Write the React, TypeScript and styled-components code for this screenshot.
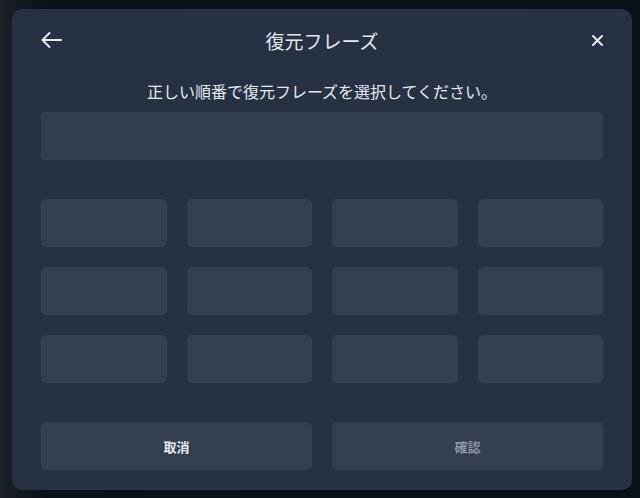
import React from "react";
import styled, { createGlobalStyle } from "styled-components";

const Global = createGlobalStyle`
  html, body { margin: 0; padding: 0; }
  body {
    width: 640px;
    height: 498px;
    overflow: hidden;
    background: linear-gradient(90deg, #1b2029 0px, #141922 20px, #0b1119 45px, #0a1018 100%);
    font-family: "Noto Sans CJK JP", "Noto Sans", sans-serif;
  }
`;

const Stage = styled.div`
  width: 640px;
  height: 498px;
  padding: 9px 8px 8px 12px;
  box-sizing: border-box;
  display: flex;
`;

const Modal = styled.div`
  width: 620px;
  height: 481px;
  box-sizing: border-box;
  background: #263244;
  border-radius: 10px;
  padding: 20px 29px 20px 29px;
  display: flex;
  flex-direction: column;
`;

const Header = styled.div`
  height: 22px;
  display: flex;
  align-items: center;
  justify-content: space-between;
`;

const IconButton = styled.button<{ $end?: boolean }>`
  background: none;
  border: none;
  padding: 0;
  width: 22px;
  height: 22px;
  display: flex;
  align-items: center;
  justify-content: ${(p) => (p.$end ? "flex-end" : "flex-start")};
  color: #e6ebf2;
  cursor: pointer;
`;

const Title = styled.h1`
  margin: 0;
  font-size: 19px;
  font-weight: 400;
  color: #e3e8ef;
`;

const Subtitle = styled.p`
  margin: 28px 0 0;
  line-height: 24px;
  text-align: center;
  font-size: 16px;
  color: #e5eaf1;
`;

const PhraseBox = styled.div`
  margin-top: 9px;
  height: 48px;
  border-radius: 3px;
  background: #323d4f;
`;

const Grid = styled.div`
  margin-top: 39px;
  display: grid;
  grid-template-columns: repeat(4, 1fr);
  gap: 20px;
`;

const Tile = styled.div`
  height: 48px;
  border-radius: 5px;
  background: #343f51;
`;

const Actions = styled.div`
  margin-top: auto;
  display: grid;
  grid-template-columns: 1fr 1fr;
  gap: 20px;
`;

const ActionButton = styled.button<{ $muted?: boolean }>`
  height: 48px;
  border: none;
  border-radius: 5px;
  background: #343f51;
  font-family: "Noto Sans CJK JP", "Noto Sans", sans-serif;
  font-size: 13px;
  font-weight: 700;
  color: ${(p) => (p.$muted ? "#8b95a4" : "#e6ebf2")};
  cursor: pointer;
`;

const BackIcon = () => (
  <svg width="22" height="18" viewBox="0 0 22 18" fill="none" stroke="currentColor" strokeWidth="2" strokeLinecap="round" strokeLinejoin="round">
    <path d="M20 9H2" />
    <path d="M8.5 2L1.5 9l7 7" />
  </svg>
);

const CloseIcon = () => (
  <svg width="11" height="11" viewBox="0 0 11 11" fill="none" stroke="currentColor" strokeWidth="2" strokeLinecap="round">
    <path d="M1 1l9 9M10 1L1 10" />
  </svg>
);

export default function App() {
  const tiles = Array.from({ length: 12 });
  return (
    <>
      <Global />
      <Stage>
        <Modal>
          <Header>
            <IconButton aria-label="戻る"><BackIcon /></IconButton>
            <Title>復元フレーズ</Title>
            <IconButton $end aria-label="閉じる"><CloseIcon /></IconButton>
          </Header>
          <Subtitle>正しい順番で復元フレーズを選択してください。</Subtitle>
          <PhraseBox />
          <Grid>
            {tiles.map((_, i) => (
              <Tile key={i} />
            ))}
          </Grid>
          <Actions>
            <ActionButton>取消</ActionButton>
            <ActionButton $muted>確認</ActionButton>
          </Actions>
        </Modal>
      </Stage>
    </>
  );
}
